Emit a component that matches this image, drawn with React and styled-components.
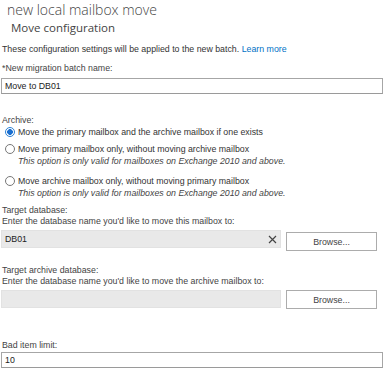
import React from "react";
import styled, { createGlobalStyle } from "styled-components";

const GlobalStyle = createGlobalStyle`
  body {
    margin: 0;
    background: #ffffff;
    font-family: "Liberation Sans", Arial, sans-serif;
    color: #333333;
  }
`;

const Page = styled.div`
  width: 385px;
  height: 368px;
  overflow: hidden;
  padding: 0 2px 0 1px;
  box-sizing: border-box;
`;

const Title = styled.h1`
  margin: 0;
  padding: 0 0 0 6px;
  font-family: "Open Sans", sans-serif;
  font-weight: 300;
  font-size: 14px;
  line-height: 20px;
  color: #444444;
`;

const Subtitle = styled.h2`
  margin: 0;
  padding: 0 0 0 10px;
  font-family: "Open Sans", sans-serif;
  font-weight: 400;
  font-size: 11.5px;
  line-height: 15px;
  color: #444444;
`;

const Intro = styled.p`
  margin: 8px 0 0 1px;
  font-size: 8.8px;
  line-height: 12px;
  color: #333333;
`;

const Link = styled.a`
  color: #0072c6;
  text-decoration: none;
`;

const Field = styled.div`
  margin-top: ${(p) => p.$top || 0}px;
`;

const Label = styled.div`
  height: 11px;
  font-size: 8.8px;
  line-height: 11px;
  color: #444444;
  padding-left: 1px;
  white-space: nowrap;
`;

const TextBox = styled.div`
  height: 16px;
  margin-top: ${(p) => p.$top || 0}px;
  box-sizing: border-box;
  border: 1px solid #a6a6a6;
  border-bottom-color: #9a9a9a;
  background: ${(p) => (p.$disabled ? "#e9e9e9" : "#ffffff")};
  font-size: 8.8px;
  line-height: 14px;
  padding-left: 3px;
  color: #222222;
  display: flex;
  align-items: center;
  justify-content: space-between;
  flex: 1;
`;

const ClearIcon = styled.span`
  width: 10px;
  height: 14px;
  margin-right: 3px;
  display: flex;
  align-items: center;
  justify-content: center;
`;

const PickerRow = styled.div`
  display: flex;
  align-items: flex-start;
  gap: 5px;
  margin-top: 3px;
  padding-right: 6px;
`;

const PickerBox = styled(TextBox)`
  height: 18px;
  border-color: #e2e2e2;
`;

const Browse = styled.button`
  width: 91px;
  height: 19px;
  margin-top: ${(p) => p.$offset || 0}px;
  border: 1px solid #acacac;
  background: #ffffff;
  font-family: "Liberation Sans", Arial, sans-serif;
  font-size: 8.8px;
  color: #444444;
  padding: 0;
`;

const RadioGroup = styled.div`
  padding-left: 4px;
`;

const RadioOption = styled.label`
  display: grid;
  grid-template-columns: 10px 1fr;
  column-gap: 3px;
  margin-top: ${(p) => p.$top || 0}px;
  font-size: 8.8px;
  line-height: 12px;
  color: #333333;
`;

const RadioDot = styled.span`
  width: 10px;
  height: 10px;
  margin-top: 1px;
  box-sizing: border-box;
  border-radius: 50%;
  border: 1px solid ${(p) => (p.$checked ? "#2a7fd4" : "#777777")};
  background: ${(p) =>
    p.$checked ? "radial-gradient(circle, #1a6fd0 0 2.6px, #ffffff 3.1px)" : "#ffffff"};
`;

const Note = styled.span`
  grid-column: 2;
  font-style: italic;
  color: #444444;
`;

const Radio = ({ checked, top, label, note }) => (
  <RadioOption $top={top}>
    <RadioDot $checked={checked} />
    <span>{label}</span>
    {note && <Note>{note}</Note>}
  </RadioOption>
);

const App = () => (
  <>
    <GlobalStyle />
    <Page>
      <Title>new local mailbox move</Title>
      <Subtitle>Move configuration</Subtitle>
      <Intro>
        These configuration settings will be applied to the new batch.{" "}
        <Link href="#">Learn more</Link>
      </Intro>

      <Field $top={8}>
        <Label>*New migration batch name:</Label>
        <TextBox $top={4}>Move to DB01</TextBox>
      </Field>

      <Field $top={21}>
        <Label>Archive:</Label>
        <RadioGroup>
          <Radio checked label="Move the primary mailbox and the archive mailbox if one exists" />
          <Radio
            top={5}
            label="Move primary mailbox only, without moving archive mailbox"
            note="This option is only valid for mailboxes on Exchange 2010 and above."
          />
          <Radio
            top={8}
            label="Move archive mailbox only, without moving primary mailbox"
            note="This option is only valid for mailboxes on Exchange 2010 and above."
          />
        </RadioGroup>
      </Field>

      <Field $top={6}>
        <Label>Target database:</Label>
        <Label>Enter the database name you'd like to move this mailbox to:</Label>
        <PickerRow>
          <PickerBox $disabled>
            DB01
            <ClearIcon>
              <svg width="9" height="9" viewBox="0 0 9 9">
                <path d="M1 1 L8 8 M8 1 L1 8" stroke="#444" strokeWidth="1.2" />
              </svg>
            </ClearIcon>
          </PickerBox>
          <Browse $offset={2}>Browse...</Browse>
        </PickerRow>
      </Field>

      <Field $top={14}>
        <Label>Target archive database:</Label>
        <Label>Enter the database name you'd like to move the archive mailbox to:</Label>
        <PickerRow>
          <PickerBox $disabled />
          <Browse>Browse...</Browse>
        </PickerRow>
      </Field>

      <Field $top={31}>
        <Label>Bad item limit:</Label>
        <TextBox $top={1}>10</TextBox>
      </Field>
    </Page>
  </>
);

export default App;
